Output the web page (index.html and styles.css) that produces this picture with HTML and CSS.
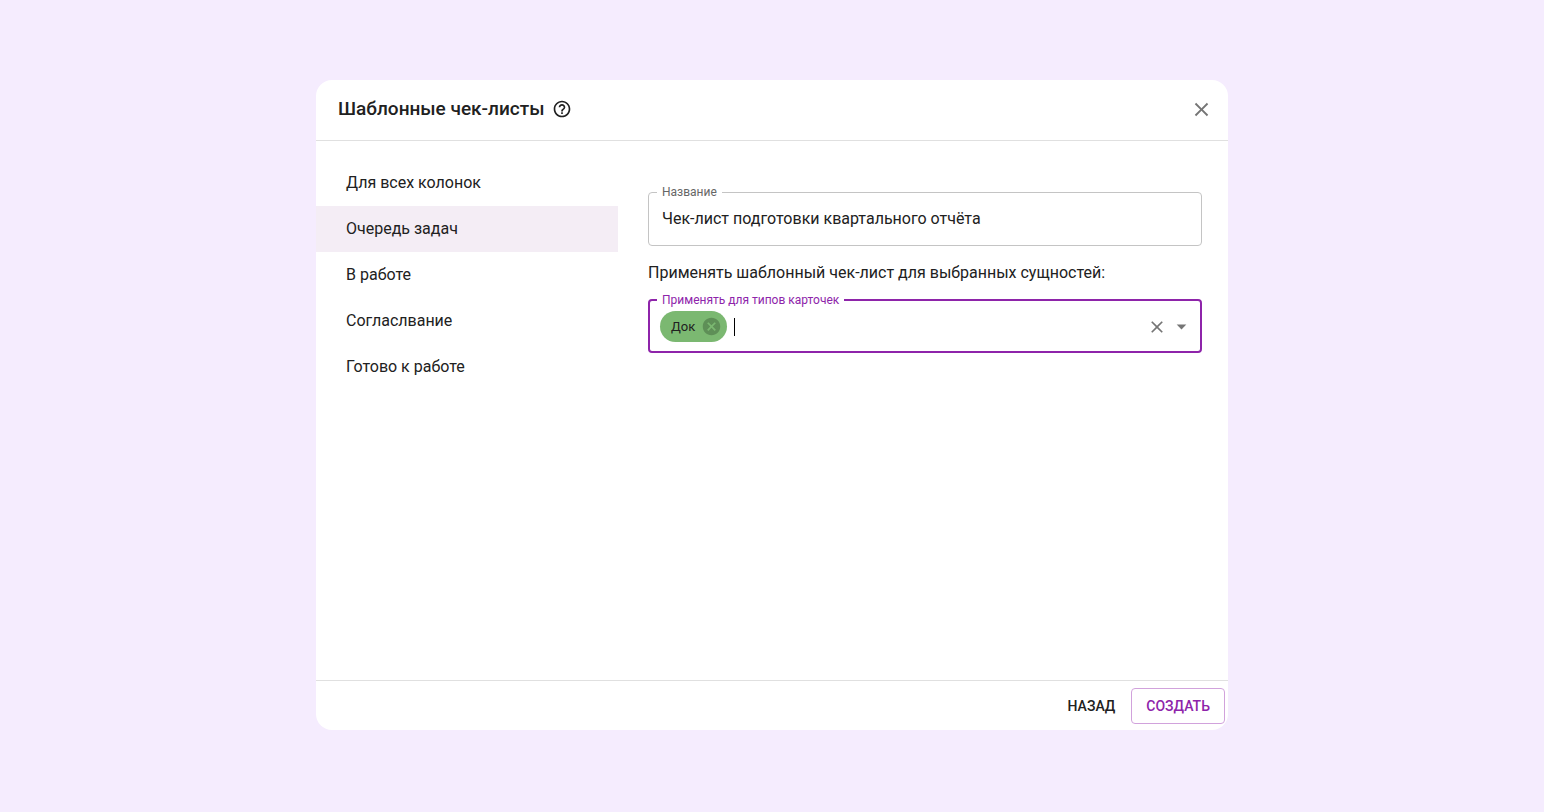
FILE: index.html
```html
<!DOCTYPE html>
<html lang="ru">
<head>
<meta charset="utf-8">
<meta name="viewport" content="width=device-width, initial-scale=1">
<title>Шаблонные чек-листы</title>
<link rel="stylesheet" href="styles.css">
</head>
<body>
<main class="dialog" role="dialog" aria-labelledby="dialog-title">
  <header class="dialog-header">
    <h1 class="dialog-title" id="dialog-title">Шаблонные чек-листы</h1>
    <button class="icon-button help" type="button" aria-label="Справка">
      <svg width="20" height="20" viewBox="0 0 24 24"><path fill="currentColor" d="M11 18h2v-2h-2v2zm1-16C6.48 2 2 6.48 2 12s4.480 10 10 10 10-4.480 10-10S17.520 2 12 2zm0 18c-4.410 0-8-3.590-8-8s3.590-8 8-8 8 3.590 8 8-3.590 8-8 8zm0-14c-2.210 0-4 1.790-4 4h2c0-1.100.9-2 2-2s2 .9 2 2c0 2-3 1.750-3 5h2c0-2.250 3-2.500 3-5 0-2.210-1.790-4-4-4z"/></svg>
    </button>
    <button class="icon-button close" type="button" aria-label="Закрыть">
      <svg width="23" height="23" viewBox="0 0 24 24"><path fill="currentColor" d="M19 6.410 17.590 5 12 10.590 6.410 5 5 6.410 10.590 12 5 17.590 6.410 19 12 13.410 17.590 19 19 17.590 13.410 12z"/></svg>
    </button>
  </header>
  <div class="dialog-body">
    <nav class="columns" aria-label="Колонки">
      <button class="column" type="button">Для всех колонок</button>
      <button class="column selected" type="button" aria-current="true">Очередь задач</button>
      <button class="column" type="button">В работе</button>
      <button class="column" type="button">Согласлвание</button>
      <button class="column" type="button">Готово к работе</button>
    </nav>
    <form class="form" id="template-form">
      <fieldset class="field">
        <legend class="field-legend"><label for="name">Название</label></legend>
        <div class="field-content">
          <input class="text-input" id="name" type="text" value="Чек-лист подготовки квартального отчёта">
        </div>
      </fieldset>
      <p class="hint">Применять шаблонный чек-лист для выбранных сущностей:</p>
      <fieldset class="field active">
        <legend class="field-legend"><label for="types">Применять для типов карточек</label></legend>
        <div class="field-content">
          <span class="chip">Док
            <button class="icon-button chip-remove" type="button" aria-label="Убрать Док">
              <svg width="21" height="21" viewBox="0 0 24 24"><path fill="currentColor" d="M12 2C6.470 2 2 6.470 2 12s4.470 10 10 10 10-4.470 10-10S17.530 2 12 2zm5 13.590L15.590 17 12 13.410 8.410 17 7 15.590 10.590 12 7 8.410 8.410 7 12 10.590 15.590 7 17 8.410 13.410 12 17 15.590z"/></svg>
            </button>
          </span>
          <span class="caret"></span>
          <input class="text-input" id="types" type="text">
          <button class="icon-button clear" type="button" aria-label="Очистить">
            <svg width="20" height="20" viewBox="0 0 24 24"><path fill="currentColor" d="M19 6.410 17.590 5 12 10.590 6.410 5 5 6.410 10.590 12 5 17.590 6.410 19 12 13.410 17.590 19 19 17.590 13.410 12z"/></svg>
          </button>
          <button class="icon-button expand" type="button" aria-label="Открыть список">
            <svg width="23" height="23" viewBox="0 0 24 24"><path fill="currentColor" d="M7 10l5 5 5-5z"/></svg>
          </button>
        </div>
      </fieldset>
    </form>
  </div>
  <footer class="dialog-footer">
    <button class="action" type="button">НАЗАД</button>
    <button class="action primary" type="submit" form="template-form">СОЗДАТЬ</button>
  </footer>
</main>
</body>
</html>
```
FILE: styles.css
```css
* {
  box-sizing: border-box;
}

body {
  margin: 0;
  min-height: 100vh;
  display: flex;
  justify-content: center;
  padding: 80px 24px 82px;
  background: #f5ecfe;
  color: #212121;
  font: 400 16px/24px Roboto, "Liberation Sans", sans-serif;
}

button,
input {
  font: inherit;
  color: inherit;
}

button {
  border: 0;
  padding: 0;
  background: none;
  cursor: pointer;
}

.dialog {
  width: 100%;
  max-width: 912px;
  display: flex;
  flex-direction: column;
  background: #fff;
  border-radius: 16px;
  overflow: hidden;
}

.dialog-header {
  display: flex;
  align-items: center;
  padding: 16px 15px 18px 22px;
  border-bottom: 1px solid #e0e0e0;
}

.dialog-title {
  margin: 0;
  font-size: 19px;
  line-height: 26px;
  font-weight: 500;
}

.icon-button {
  display: flex;
  flex: none;
  color: #757575;
}

.help {
  margin-left: 8px;
  color: #212121;
}

.close {
  margin-left: auto;
}

.dialog-body {
  flex: 1;
  display: flex;
}

.columns {
  flex: 0 0 302px;
  display: flex;
  flex-direction: column;
  padding-top: 19px;
}

.column {
  padding: 11px 30px;
  text-align: left;
}

.selected {
  background: #f4edf5;
}

.form {
  flex: 1;
  min-width: 0;
  padding: 44px 26px 24px 30px;
}

.field {
  min-width: 0;
  margin: 0;
  padding: 0 8px 6px;
  border: 1px solid #c4c4c4;
  border-radius: 4px;
}

.field-legend {
  padding: 0 5px;
  font-size: 12px;
  line-height: 14px;
  color: #666;
}

.field-content {
  display: flex;
  align-items: center;
  height: 40px;
  padding: 0 5px;
}

.text-input {
  flex: 1;
  min-width: 0;
  padding: 0;
  border: 0;
  outline: 0;
  background: none;
}

.hint {
  margin: 15px 0 8px;
}

.active {
  padding: 0 7px 5px;
  border: 2px solid #8e24aa;
}

.active .field-legend {
  color: #8e24aa;
}

.active .field-content {
  height: 39px;
  padding: 0 0 0 3px;
}

.chip {
  display: flex;
  align-items: center;
  gap: 6px;
  height: 31px;
  padding: 0 5px 0 11px;
  border-radius: 16px;
  background: #7bb871;
  font-size: 13px;
}

.chip-remove {
  color: #5e8f57;
}

.caret {
  width: 1px;
  height: 18px;
  margin-left: 7px;
  background: #000;
}

.clear {
  margin-right: 3px;
}

.dialog-footer {
  display: flex;
  justify-content: flex-end;
  gap: 1px;
  padding: 7px 3px 6px;
  border-top: 1px solid #e0e0e0;
}

.action {
  padding: 5px 14px;
  border: 1px solid transparent;
  border-radius: 4px;
  font-size: 14px;
  font-weight: 500;
}

.primary {
  border-color: #d1a2dc;
  color: #8e24aa;
}
```
